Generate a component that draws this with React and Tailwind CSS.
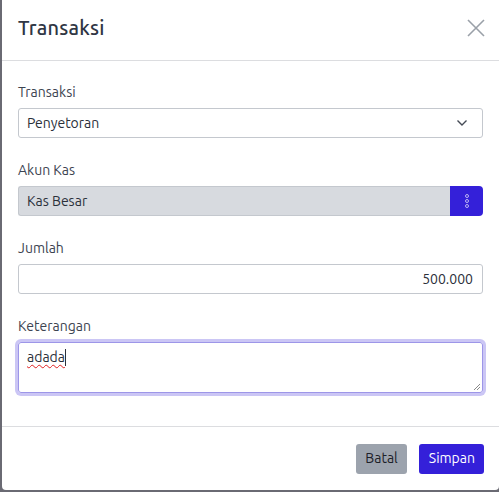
import React from 'react'

function Field({ label, children }) {
  return (
    <div className="mb-[22px]">
      <div className="h-5 mb-[6px] text-[14px] leading-5 text-[#3d4451]">{label}</div>
      {children}
    </div>
  )
}

export default function App() {
  return (
    <div className="w-[499px] h-[492px] bg-[#6a6a73] pl-[2px] overflow-hidden" style={{ fontFamily: '"Ubuntu", "Noto Sans", sans-serif' }}>
      <div className="w-[497px] h-[490px] bg-white rounded-b-[4px] flex flex-col">
        {/* Header */}
        <div className="h-[61px] border-b border-[#dcdde0] flex items-center justify-between pl-4 pr-[14px] pb-[4px]">
          <h2 className="text-[20px] font-medium text-[#2f3644] tracking-[0.2px]">Transaksi</h2>
          <svg width="18" height="18" viewBox="0 0 18 18" className="text-[#9aa0a8]">
            <path d="M1 1L17 17M17 1L1 17" stroke="currentColor" strokeWidth="1.6" />
          </svg>
        </div>

        {/* Body */}
        <div className="px-4 pt-[21px] flex-1">
          <Field label="Transaksi">
            <div className="h-[30px] border border-[#c4c8ce] rounded-[3px] flex items-center justify-between pl-[8px] pr-[14px] text-[14px] text-[#2b303a]">
              <span>Penyetoran</span>
              <svg width="12" height="8" viewBox="0 0 12 8">
                <path d="M1.5 1.5L6 6L10.5 1.5" fill="none" stroke="#444a55" strokeWidth="1.4" />
              </svg>
            </div>
          </Field>

          <Field label="Akun Kas">
            <div className="h-[30px] flex">
              <div className="flex-1 bg-[#d7dadf] border border-[#c4c8ce] border-r-0 rounded-l-[3px] flex items-center pl-[8px] text-[14px] text-[#2b303a]">
                Kas Besar
              </div>
              <div className="w-[33px] bg-[#3420d9] rounded-r-[4px] flex items-center justify-center">
                <svg width="6" height="16" viewBox="0 0 6 16">
                  <circle cx="3" cy="3" r="1.5" fill="none" stroke="#b9b2f3" strokeWidth="1" />
                  <circle cx="3" cy="8" r="1.5" fill="none" stroke="#b9b2f3" strokeWidth="1" />
                  <circle cx="3" cy="13" r="1.5" fill="none" stroke="#b9b2f3" strokeWidth="1" />
                </svg>
              </div>
            </div>
          </Field>

          <Field label="Jumlah">
            <div className="h-[30px] border border-[#c4c8ce] rounded-[3px] flex items-center justify-end pr-[9px] text-[14px] text-[#2b303a]">
              500.000
            </div>
          </Field>

          <Field label="Keterangan">
            <div className="relative h-[51px] border border-[#9d96e8] rounded-[3px] ring-[3px] ring-[#cbc6f5] px-[8px] pt-[4px] text-[14px] text-[#2b303a]">
              <span className="underline decoration-wavy decoration-[#e02020] decoration-[1px] underline-offset-[2px]">adada</span>
              <span className="inline-block w-px h-[17px] bg-[#2b303a] align-middle -mt-[2px]"></span>
              <svg width="8" height="8" viewBox="0 0 8 8" className="absolute right-[1px] bottom-[1px]">
                <path d="M7 1L1 7M7 4L4 7" stroke="#8a8a8a" strokeWidth="1" />
              </svg>
            </div>
          </Field>
        </div>

        {/* Footer */}
        <div className="h-[64px] border-t border-[#dcdde0] flex items-center justify-end gap-3 pr-[15px]">
          <button className="h-[30px] px-[9px] bg-[#9ca3ad] rounded-[3px] text-[14px] text-[#1d2129]">Batal</button>
          <button className="h-[30px] pl-[10px] pr-[9px] bg-[#3420d9] rounded-[3px] text-[14px] text-white">Simpan</button>
        </div>
      </div>
    </div>
  )
}
